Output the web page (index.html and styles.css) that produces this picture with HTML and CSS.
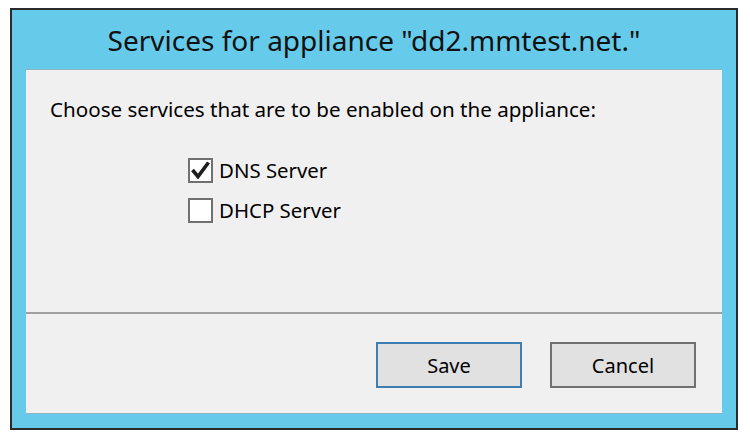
FILE: index.html
```html
<!DOCTYPE html>
<html>
<head>
<meta charset="utf-8">
<link rel="stylesheet" href="styles.css">
</head>
<body>
<div class="window">
  <div class="titlebar">Services for appliance "dd2.mmtest.net."</div>
  <div class="panel">
    <div class="content">
      <p class="prompt">Choose services that are to be enabled on the appliance:</p>
      <div class="options">
        <label class="option">
          <span class="box"><svg viewBox="0 0 21 21" width="21" height="21"><path d="M2.5 10 L8 16.5 L18.5 2.5" fill="none" stroke="#1e1e1e" stroke-width="3.6" stroke-linejoin="miter" stroke-linecap="butt"/></svg></span>
          <span class="label">DNS Server</span>
        </label>
        <label class="option">
          <span class="box"></span>
          <span class="label">DHCP Server</span>
        </label>
      </div>
    </div>
    <div class="footer">
      <button class="btn primary">Save</button>
      <button class="btn">Cancel</button>
    </div>
  </div>
</div>
</body>
</html>
```

FILE: styles.css
```css
html, body {
  margin: 0;
  padding: 0;
  background: #ffffff;
}
body {
  font-family: "Noto Sans", "Open Sans", sans-serif;
  color: #000;
}
.window {
  box-sizing: border-box;
  margin: 8px 0 0 10px;
  width: 728px;
  height: 422px;
  background: #66cbea;
  border: 2px solid #2b2b2b;
  padding: 0 14px 14px 14px;
  display: flex;
  flex-direction: column;
}
.titlebar {
  height: 59px;
  display: flex;
  align-items: center;
  justify-content: center;
  font-size: 28px;
  color: #111;
  padding-top: 1px;
  box-sizing: border-box;
}
.panel {
  flex: 1;
  background: #f0f0f0;
  border-top: 1px solid #8eb4c4;
  border-bottom: 1px solid #8eb4c4;
  display: flex;
  flex-direction: column;
}
.content {
  height: 242px;
  padding: 0 0 0 24px;
}
.prompt {
  margin: 24px 0 0 0;
  font-size: 20.6px;
  line-height: 30px;
}
.options {
  margin: 34px 0 0 138px;
  display: flex;
  flex-direction: column;
  gap: 15px;
}
.option {
  display: flex;
  align-items: center;
  gap: 6px;
  height: 25px;
}
.box {
  box-sizing: border-box;
  width: 25px;
  height: 25px;
  border: 2px solid #707070;
  background: #fff;
  display: flex;
  align-items: center;
  justify-content: center;
}
.label {
  font-size: 20.4px;
  line-height: 25px;
}
.footer {
  border-top: 2px solid #a0a0a0;
  flex: 1;
  display: flex;
  justify-content: flex-end;
  align-items: flex-start;
  gap: 28px;
  padding: 28px 26px 0 0;
}
.btn {
  box-sizing: border-box;
  width: 146px;
  height: 46px;
  background: #e1e1e1;
  border: 2px solid #707070;
  font-family: "Noto Sans", "Open Sans", sans-serif;
  font-size: 20px;
  color: #000;
  padding: 0;
}
.btn.primary {
  border-color: #3d7fb3;
}
```
